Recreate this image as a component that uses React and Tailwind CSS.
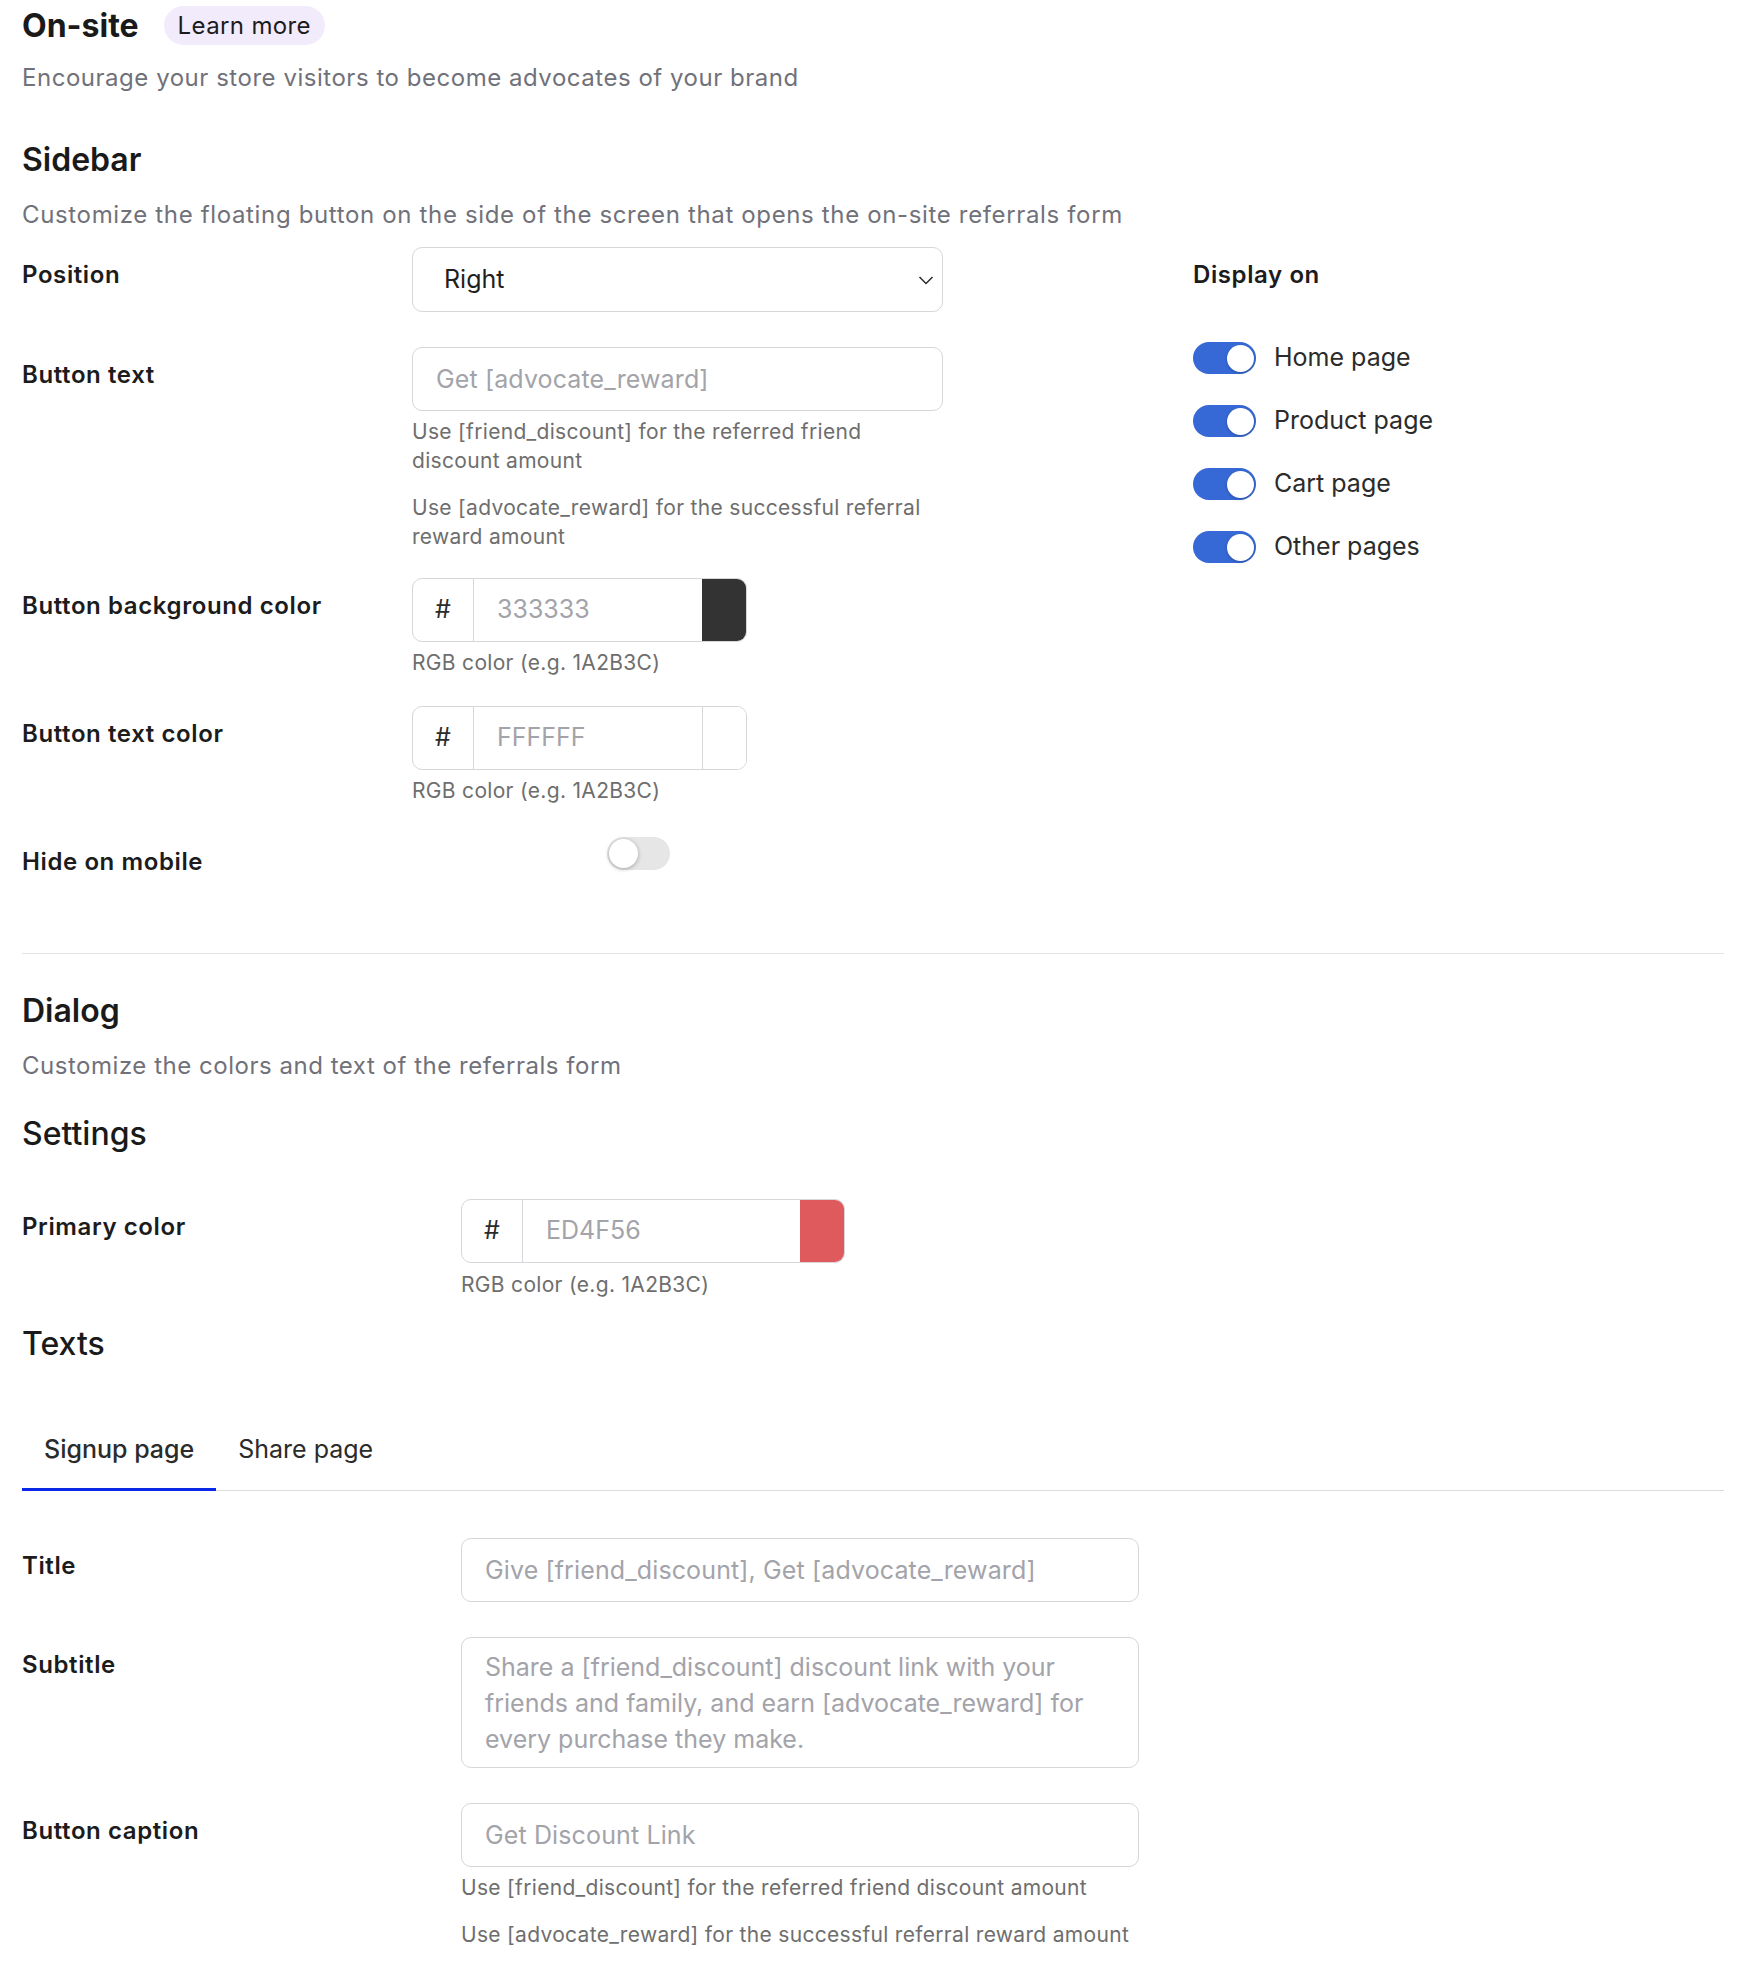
import React, { useState } from "react";

function Toggle({ on }) {
  if (on) {
    return (
      <div className="w-[63px] h-[32px] rounded-full bg-[#3669d6] flex items-center justify-end pr-[2px] shrink-0">
        <div className="w-[27px] h-[27px] rounded-full bg-white shadow-[0_1px_3px_rgba(0,0,0,0.25)]" />
      </div>
    );
  }
  return (
    <div className="w-[63px] h-[33px] rounded-full bg-[#e6e6e6] flex items-center pl-[2px] shrink-0">
      <div className="w-[29px] h-[29px] rounded-full bg-white shadow-[0_1px_4px_rgba(0,0,0,0.3)]" />
    </div>
  );
}

function Label({ children, width }) {
  return (
    <div
      className={`${width} shrink-0 pt-[13px] text-[24px] leading-[30px] tracking-[0.025em] font-semibold text-[#1c1c1c]`}
    >
      {children}
    </div>
  );
}

function Help({ children, className = "" }) {
  return (
    <p className={`text-[21px] leading-[29px] tracking-[0.015em] text-[#6e6e6e] ${className}`}>
      {children}
    </p>
  );
}

function TextInput({ placeholder }) {
  return (
    <input
      type="text"
      placeholder={placeholder}
      className="w-full h-[64px] px-[23px] rounded-[10px] border border-[#d6d6db] bg-white text-[25px] tracking-[0.005em] text-[#1f1f1f] placeholder:text-[#a3a3aa] outline-none"
    />
  );
}

function ColorInput({ value, swatch, width }) {
  return (
    <div className={`${width} h-[64px] flex rounded-[10px] border border-[#d6d6db] overflow-hidden bg-white`}>
      <div className="w-[61px] shrink-0 flex items-center justify-center border-r border-[#d6d6db] text-[25px] text-[#2b2b2b]">
        #
      </div>
      <input
        type="text"
        placeholder={value}
        className="flex-1 min-w-0 px-[23px] text-[25px] placeholder:text-[#a3a3aa] outline-none"
      />
      <div className={`w-[44px] shrink-0 ${swatch}`} />
    </div>
  );
}

export default function App() {
  const [tab, setTab] = useState("signup");
  const pages = ["Home page", "Product page", "Cart page", "Other pages"];

  return (
    <div className="min-h-screen bg-white font-[Inter,sans-serif] text-[#1c1c1c] pl-[22px] pr-[24px] pt-[6px] pb-[20px]">
      {/* header */}
      <div className="flex items-center gap-[25px]">
        <h1 className="text-[32px] leading-[39px] font-bold text-[#1a1a1a]">On-site</h1>
        <button className="h-[39px] px-[14px] rounded-full bg-[#f2ebfc] text-[24px] tracking-[0.015em] text-[#1c1c1c]">
          Learn more
        </button>
      </div>
      <p className="mt-[18px] text-[24px] leading-[30px] tracking-[0.022em] text-[#71717a]">
        Encourage your store visitors to become advocates of your brand
      </p>

      {/* Sidebar */}
      <h2 className="mt-[47px] text-[32px] leading-[40px] font-semibold text-[#1a1a1a]">Sidebar</h2>
      <p className="mt-[20px] text-[24px] leading-[30px] tracking-[0.027em] text-[#71717a]">
        Customize the floating button on the side of the screen that opens the on-site referrals form
      </p>

      <div className="mt-[17px] flex">
        <div className="w-[921px] shrink-0 flex flex-col">
          <div className="flex">
            <Label width="w-[390px]">Position</Label>
            <div className="w-[531px] h-[65px] rounded-[10px] border border-[#d6d6db] flex items-center justify-between pl-[31px] pr-[8px] text-[25px] text-[#1f1f1f]">
              <span>Right</span>
              <svg width="16" height="10" viewBox="0 0 16 10" fill="none">
                <path d="M1.5 2L8 8.5L14.5 2" stroke="#2b2b2b" strokeWidth="1.5" />
              </svg>
            </div>
          </div>

          <div className="flex mt-[35px]">
            <Label width="w-[390px]">Button text</Label>
            <div className="w-[531px]">
              <TextInput placeholder="Get [advocate_reward]" />
              <Help className="mt-[6px]">
                Use [friend_discount] for the referred friend discount amount
              </Help>
              <Help className="mt-[18px]">
                Use [advocate_reward] for the successful referral reward amount
              </Help>
            </div>
          </div>

          <div className="flex mt-[27px]">
            <Label width="w-[390px]">Button background color</Label>
            <div>
              <ColorInput value="333333" swatch="bg-[#333333]" width="w-[335px]" />
              <Help className="mt-[6px]">RGB color (e.g. 1A2B3C)</Help>
            </div>
          </div>

          <div className="flex mt-[29px]">
            <Label width="w-[390px]">Button text color</Label>
            <div>
              <ColorInput value="FFFFFF" swatch="bg-white border-l border-[#d6d6db]" width="w-[335px]" />
              <Help className="mt-[6px]">RGB color (e.g. 1A2B3C)</Help>
            </div>
          </div>

          <div className="flex mt-[29px]">
            <Label width="w-[585px]">Hide on mobile</Label>
            <div className="pt-[3px]">
              <Toggle on={false} />
            </div>
          </div>
        </div>

        <div className="ml-[250px]">
          <div className="pt-[13px] text-[24px] leading-[30px] tracking-[0.025em] font-semibold text-[#1c1c1c]">Display on</div>
          <div className="mt-[52px] flex flex-col gap-[31px]">
            {pages.map((p) => (
              <div key={p} className="flex items-center gap-[18px] h-[32px]">
                <Toggle on />
                <span className="text-[25px] text-[#2b2b2b]">{p}</span>
              </div>
            ))}
          </div>
        </div>
      </div>

      <div className="mt-[76px] border-t border-[#e4e4e7]" />

      {/* Dialog */}
      <h2 className="mt-[37px] text-[32px] leading-[40px] font-semibold text-[#1a1a1a]">Dialog</h2>
      <p className="mt-[20px] text-[24px] leading-[30px] tracking-[0.022em] text-[#71717a]">
        Customize the colors and text of the referrals form
      </p>
      <h3 className="mt-[33px] text-[32px] leading-[40px] font-medium text-[#1a1a1a]">Settings</h3>

      <div className="flex mt-[45px]">
        <Label width="w-[439px]">Primary color</Label>
        <div>
          <ColorInput value="ED4F56" swatch="bg-[#df5a5c]" width="w-[384px]" />
          <Help className="mt-[7px]">RGB color (e.g. 1A2B3C)</Help>
        </div>
      </div>

      <h3 className="mt-[25px] text-[32px] leading-[40px] font-medium text-[#1a1a1a]">Texts</h3>

      <div className="mt-[70px] flex border-b border-[#dcdcdc]">
        <button
          onClick={() => setTab("signup")}
          className={`-mb-px px-[22px] pb-[24px] border-b-[3px] text-[25px] leading-[30px] ${
            tab === "signup" ? "border-[#0a28e8] font-medium text-[#2b2b2b]" : "border-transparent text-[#2b2b2b]"
          }`}
        >
          Signup page
        </button>
        <button
          onClick={() => setTab("share")}
          className={`-mb-px px-[22px] pb-[24px] border-b-[3px] text-[25px] leading-[30px] ${
            tab === "share" ? "border-[#0a28e8] font-medium text-[#2b2b2b]" : "border-transparent text-[#2b2b2b]"
          }`}
        >
          Share page
        </button>
      </div>

      <div className="flex mt-[47px]">
        <Label width="w-[439px]">Title</Label>
        <div className="w-[678px]">
          <TextInput placeholder="Give [friend_discount], Get [advocate_reward]" />
        </div>
      </div>

      <div className="flex mt-[35px]">
        <Label width="w-[439px]">Subtitle</Label>
        <div className="w-[678px]">
          <textarea
            placeholder="Share a [friend_discount] discount link with your friends and family, and earn [advocate_reward] for every purchase they make."
            className="block w-full h-[131px] resize-none px-[23px] py-[11px] rounded-[10px] border border-[#d6d6db] text-[25px] leading-[36px] placeholder:text-[#a3a3aa] outline-none"
          />
        </div>
      </div>

      <div className="flex mt-[35px]">
        <Label width="w-[439px]">Button caption</Label>
        <div className="w-[678px]">
          <TextInput placeholder="Get Discount Link" />
          <Help className="mt-[6px]">Use [friend_discount] for the referred friend discount amount</Help>
          <Help className="mt-[18px]">Use [advocate_reward] for the successful referral reward amount</Help>
        </div>
      </div>
    </div>
  );
}
